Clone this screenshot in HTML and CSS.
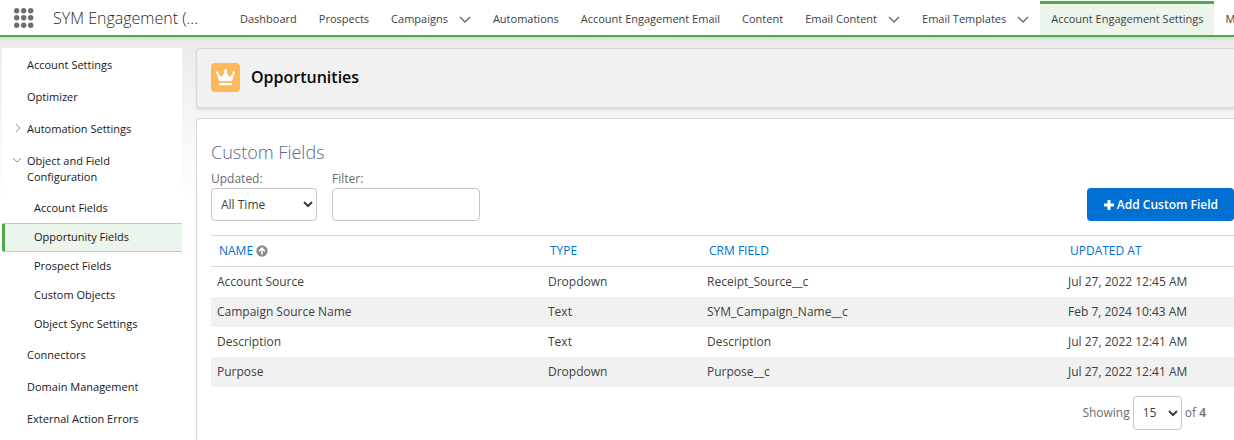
FILE: index.html
```html
<!DOCTYPE html>
<html lang="en">
<head>
    <meta charset="UTF-8">
    <meta name="viewport" content="width=device-width, initial-scale=1.0">
    <title>Opportunities | Account Engagement Settings</title>
    <link rel="stylesheet" href="styles.css">
</head>
<body>

<header class="topbar">
    <button class="launcher" aria-label="App Launcher">
        <svg width="20" height="20" viewBox="0 0 20 20" fill="#706e6b">
            <circle cx="2.7" cy="2.7" r="2.7"/><circle cx="9.7" cy="2.7" r="2.7"/><circle cx="16.7" cy="2.7" r="2.7"/>
            <circle cx="2.7" cy="9.7" r="2.7"/><circle cx="9.7" cy="9.7" r="2.7"/><circle cx="16.7" cy="9.7" r="2.7"/>
            <circle cx="2.7" cy="17.2" r="2.7"/><circle cx="9.7" cy="17.2" r="2.7"/><circle cx="16.7" cy="17.2" r="2.7"/>
        </svg>
    </button>
    <span class="app-name">SYM Engagement (...</span>
    <nav class="tabs">
        <a href="#">Dashboard</a>
        <a href="#">Prospects</a>
        <a href="#">Campaigns <svg class="chevron" viewBox="0 0 12 8"><path d="M1 1l5 5 5-5"/></svg></a>
        <a href="#">Automations</a>
        <a href="#">Account Engagement Email</a>
        <a href="#">Content</a>
        <a href="#">Email Content <svg class="chevron" viewBox="0 0 12 8"><path d="M1 1l5 5 5-5"/></svg></a>
        <a href="#">Email Templates <svg class="chevron" viewBox="0 0 12 8"><path d="M1 1l5 5 5-5"/></svg></a>
        <a href="#" class="active">Account Engagement Settings</a>
        <a href="#">M</a>
    </nav>
</header>

<div class="layout">
    <nav class="sidebar">
        <a href="#">Account Settings</a>
        <a href="#">Optimizer</a>
        <a href="#"><svg class="arrow" viewBox="0 0 10 10"><path d="M4 1l4 4-4 4"/></svg>Automation Settings</a>
        <a href="#"><svg class="arrow" viewBox="0 0 10 10"><path d="M1 3l4 4 4-4"/></svg>Object and Field<br>Configuration</a>
        <div class="subnav">
            <a href="#">Account Fields</a>
            <a href="#" class="current">Opportunity Fields</a>
            <a href="#">Prospect Fields</a>
            <a href="#">Custom Objects</a>
            <a href="#">Object Sync Settings</a>
        </div>
        <a href="#">Connectors</a>
        <a href="#">Domain Management</a>
        <a href="#">External Action Errors</a>
    </nav>

    <main class="content">
        <div class="page-header">
            <span class="crown">
                <svg width="29" height="29" viewBox="0 0 29 29" fill="#fff">
                    <path d="M5.8 10l4.6 3.6c.4.2.7.1.9-.2L13.8 8h1.4l2.5 5.4c.2.3.5.4.9.2L23.2 10l-1.9 7.6c-.1.4-.3.6-.7.6H8.4c-.4 0-.6-.2-.7-.6z"/>
                    <circle cx="6.3" cy="9.7" r="1.5"/><circle cx="14.5" cy="7.6" r="1.6"/><circle cx="22.7" cy="9.7" r="1.5"/>
                    <rect x="8" y="20" width="13" height="2.2" rx="1"/>
                </svg>
            </span>
            <h1>Opportunities</h1>
        </div>

        <section class="panel">
            <h2>Custom Fields</h2>
            <div class="filters">
                <div class="field">
                    <label for="updated">Updated:</label>
                    <select id="updated" class="select-updated"><option>All Time</option></select>
                </div>
                <div class="field">
                    <label for="filter">Filter:</label>
                    <input type="text" id="filter">
                </div>
                <button class="add-button"><svg width="12" height="12" viewBox="0 0 12 12"><path d="M6 1v10M1 6h10" stroke="#fff" stroke-width="3"/></svg>Add Custom Field</button>
            </div>

            <table>
                <colgroup><col class="col-name"><col class="col-type"><col class="col-crm"><col></colgroup>
                <thead>
                    <tr>
                        <th><a href="#">NAME</a> <svg class="sort" viewBox="0 0 12 12"><circle cx="6" cy="6" r="5.7" fill="#8c8c8c"/><path d="M6 9.6V3.4M3 6.2l3-3 3 3" fill="none" stroke="#fff" stroke-width="1.6"/></svg></th>
                        <th><a href="#">TYPE</a></th>
                        <th><a href="#">CRM FIELD</a></th>
                        <th><a href="#">UPDATED AT</a></th>
                    </tr>
                </thead>
                <tbody>
                    <tr><td>Account Source</td><td>Dropdown</td><td>Receipt_Source__c</td><td>Jul 27, 2022 12:45 AM</td></tr>
                    <tr><td>Campaign Source Name</td><td>Text</td><td>SYM_Campaign_Name__c</td><td>Feb 7, 2024 10:43 AM</td></tr>
                    <tr><td>Description</td><td>Text</td><td>Description</td><td>Jul 27, 2022 12:41 AM</td></tr>
                    <tr><td>Purpose</td><td>Dropdown</td><td>Purpose__c</td><td>Jul 27, 2022 12:41 AM</td></tr>
                </tbody>
            </table>

            <div class="pager">
                <label for="page-size">Showing</label>
                <select id="page-size" class="select-size"><option>15</option></select>
                <span>of <b>4</b></span>
            </div>
        </section>
    </main>
</div>

</body>
</html>
```
FILE: styles.css
```css
* {
    box-sizing: border-box;
}
body {
    margin: 0;
    min-height: 100vh;
    font-family: "Open Sans", sans-serif;
    font-size: 12px;
    color: #3e3e3c;
    background: linear-gradient(#ebebeb 37px, #fff 200px);
    overflow: hidden;
}
a {
    color: inherit;
    text-decoration: none;
}
.topbar {
    display: flex;
    align-items: center;
    height: 37px;
    background: #fff;
    border-bottom: 2px solid #4bab48;
    box-shadow: 0 1px 4px rgba(0, 0, 0, 0.14);
}
.launcher {
    display: flex;
    flex: none;
    margin: 0 19px 0 14px;
    padding: 0;
    border: none;
    background: none;
}
.app-name {
    flex: none;
    width: 176px;
    font-size: 16px;
    font-weight: 300;
    color: #2b2826;
    white-space: nowrap;
}
.tabs {
    display: flex;
    align-self: stretch;
    padding-top: 1px;
    font-size: 11px;
    white-space: nowrap;
}
.tabs a {
    display: flex;
    align-items: center;
    gap: 11px;
    padding: 0 11px 2px;
    border-top: 3px solid transparent;
}
.tabs .active {
    background: #ebf5ec;
    border-top-color: #4bab48;
}
.chevron {
    width: 12px;
    height: 8px;
    margin-top: 3px;
    fill: none;
    stroke: #706e6b;
    stroke-width: 1.5;
}
.layout {
    display: flex;
    align-items: flex-start;
    gap: 14px;
    padding: 11px 0 0 2px;
}
.sidebar {
    flex: none;
    width: 180px;
    min-height: calc(100vh - 48px);
    padding-top: 1px;
    background: #fff;
    color: #16181a;
    font-size: 11px;
}
.sidebar a {
    position: relative;
    display: block;
    padding: 8px 0 8px 25px;
    line-height: 16px;
    white-space: nowrap;
}
.arrow {
    position: absolute;
    left: 10px;
    top: 10px;
    width: 10px;
    height: 10px;
    fill: none;
    stroke: #8a96a8;
}
.subnav {
    padding-top: 1px;
}
.sidebar .subnav a {
    padding: 6px 0 7px 32px;
}
.sidebar .subnav .current {
    padding: 5px 0 6px 32px;
    background: #ebf5ec;
    border: solid #c9c7c5;
    border-width: 1px 0;
    box-shadow: inset 3px 0 #4bab48;
}
.content {
    flex: 1;
    min-width: 0;
}
.page-header {
    display: flex;
    align-items: center;
    gap: 11px;
    height: 60px;
    padding: 0 14px 2px;
    background: #f1f1f1;
    border: 1px solid #d8d8d8;
    border-right: none;
    border-radius: 4px 0 0 4px;
    box-shadow: 0 2px 2px rgba(0, 0, 0, 0.1);
}
.crown {
    display: flex;
    background: #fcb95b;
    border-radius: 4px;
}
h1 {
    margin: 0;
    font-size: 16px;
    font-weight: 600;
    line-height: 29px;
    color: #080707;
}
.panel {
    min-height: calc(100vh - 118px);
    margin-top: 10px;
    padding: 22px 0 0 14px;
    background: #fff;
    border: 1px solid #d8d8d8;
    border-width: 1px 0 0 1px;
    border-radius: 4px 0 0 0;
}
h2 {
    margin: 0;
    font-size: 18px;
    font-weight: 300;
    line-height: 22px;
    color: #54698d;
}
.filters {
    display: flex;
    align-items: flex-end;
    gap: 15px;
    margin: 7px 0 14px;
}
.field label {
    display: block;
    line-height: 18px;
    color: #6b6b6b;
}
select,
.field input {
    display: block;
    height: 33px;
    border: 1px solid #c6c6c6;
    border-radius: 4px;
    background: #fff;
    font: inherit;
    color: #3e3e3c;
}
.field input {
    width: 148px;
    padding: 0 8px;
}
.select-updated {
    width: 106px;
    padding-left: 5px;
}
.add-button {
    display: flex;
    align-items: center;
    gap: 2px;
    height: 33px;
    margin-left: auto;
    padding: 0 16px;
    border: none;
    border-radius: 4px;
    background: #0070d2;
    color: #fff;
    font: inherit;
    font-weight: 600;
}
table {
    width: 100%;
    table-layout: fixed;
    border-collapse: collapse;
}
.col-name {
    width: 331px;
}
.col-type {
    width: 159px;
}
.col-crm {
    width: 361px;
}
th {
    height: 31px;
    padding: 0 8px 1px;
    border: 1px solid #d8d8d8;
    border-width: 1px 0;
    font-weight: 400;
    text-align: left;
    color: #0070d2;
}
.sort {
    width: 12px;
    height: 12px;
    vertical-align: -2px;
}
td {
    height: 30px;
    padding: 0 6px;
}
tbody tr:nth-child(even) {
    background: #f1f1f1;
}
.pager {
    display: flex;
    justify-content: flex-end;
    align-items: center;
    gap: 3px;
    padding: 9px 28px 0 0;
    color: #6b6b6b;
}
.pager b {
    font-weight: 600;
}
.select-size {
    width: 49px;
    height: 34px;
    padding-left: 5px;
}
```
